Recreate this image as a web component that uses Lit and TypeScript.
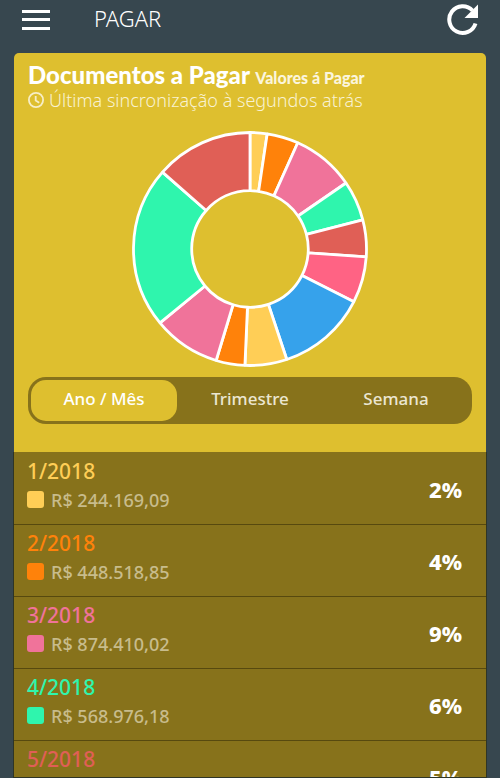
import { LitElement, html, svg, css } from "lit";
import { customElement, state } from "lit/decorators.js";
import { styleMap } from "lit/directives/style-map.js";

const YELLOW = "#ffce56";
const ORANGE = "#ff820a";
const PINK = "#f0739a";
const GREEN = "#2ff5ad";
const RED = "#e05f56";
const ROSE = "#ff6384";
const BLUE = "#36a2eb";

interface Slice {
  color: string;
  end: number;
}

const SLICES: Slice[] = [
  { color: YELLOW, end: 8.5 },
  { color: ORANGE, end: 24.2 },
  { color: PINK, end: 55.5 },
  { color: GREEN, end: 75.5 },
  { color: RED, end: 93.9 },
  { color: ROSE, end: 116.9 },
  { color: BLUE, end: 161.6 },
  { color: YELLOW, end: 182.5 },
  { color: ORANGE, end: 196.9 },
  { color: PINK, end: 230.6 },
  { color: GREEN, end: 311.3 },
  { color: RED, end: 360 },
];

const MONTHS = [
  { label: "1/2018", value: "R$ 244.169,09", share: "2%", color: YELLOW },
  { label: "2/2018", value: "R$ 448.518,85", share: "4%", color: ORANGE },
  { label: "3/2018", value: "R$ 874.410,02", share: "9%", color: PINK },
  { label: "4/2018", value: "R$ 568.976,18", share: "6%", color: GREEN },
  { label: "5/2018", value: "", share: "5%", color: RED },
];

@customElement("donut-chart")
export class DonutChart extends LitElement {
  static styles = css`
    :host {
      display: block;
      width: 236px;
      height: 236px;
    }
    .chart {
      display: block;
      width: 100%;
      height: 100%;
    }
    .slice {
      stroke: #fff;
      stroke-width: 2.8;
      stroke-linejoin: bevel;
    }
  `;

  private point(radius: number, degrees: number) {
    const a = (degrees * Math.PI) / 180;
    return `${(radius * Math.sin(a)).toFixed(2)} ${(-radius * Math.cos(a)).toFixed(2)}`;
  }

  private path(start: number, end: number) {
    const outer = 116.5;
    const inner = 58.3;
    return `M${this.point(outer, start)}A${outer} ${outer} 0 0 1 ${this.point(outer, end)}L${this.point(inner, end)}A${inner} ${inner} 0 0 0 ${this.point(inner, start)}Z`;
  }

  render() {
    return html`<svg class="chart" viewBox="-118 -118 236 236" role="img" aria-label="Valores por mês">
      ${SLICES.map((s, i) => svg`<path class="slice" fill=${s.color} d=${this.path(i ? SLICES[i - 1].end : 0, s.end)}></path>`)}
    </svg>`;
  }
}

@customElement("app-root")
export class AppRoot extends LitElement {
  @state() private period = "Ano / Mês";

  static styles = css`
    :host {
      display: flex;
      flex-direction: column;
      height: 100vh;
      overflow: hidden;
      background: #37474f;
      color: #fff;
      font-family: "Noto Sans", "Open Sans", sans-serif;
    }
    * {
      box-sizing: border-box;
    }
    button {
      border: 0;
      padding: 0;
      background: none;
      color: inherit;
      font: inherit;
      cursor: pointer;
    }
    .bar {
      display: flex;
      flex: none;
      align-items: center;
      height: 40px;
      margin-bottom: 13px;
      padding: 0 20px 0 22px;
    }
    .icon {
      display: block;
      flex: none;
    }
    .title {
      flex: 1;
      margin: 0 0 4px 44px;
      font-size: 22px;
      font-weight: 300;
      line-height: 32px;
    }
    .card {
      display: flex;
      flex: 1;
      flex-direction: column;
      min-height: 0;
      margin: 0 13px;
    }
    .summary {
      flex: none;
      margin: 0 1px;
      padding: 9px 14px 28px;
      border-radius: 5px 5px 0 0;
      background: #debf2f;
    }
    .heading {
      margin: 0;
      font-family: Lato, sans-serif;
      font-size: 24px;
      font-weight: 900;
      line-height: 26px;
      white-space: nowrap;
    }
    .sub {
      font-size: 16px;
      line-height: 1;
      color: #fbf5dc;
    }
    .sync {
      display: flex;
      align-items: center;
      gap: 4px;
      margin: 0 0 19px;
      font-size: 18px;
      font-weight: 300;
      line-height: 24px;
      color: #f9f2d2;
      white-space: nowrap;
    }
    .donut {
      margin: 0 auto 10px;
    }
    .tabs {
      display: flex;
      height: 47px;
      padding: 3px;
      border-radius: 18px;
      background: #87721b;
    }
    .tab {
      flex: 1;
      padding-bottom: 5px;
      border-radius: 15px;
      color: #ebe6d1;
      font-size: 17px;
      font-weight: 500;
    }
    .tab[aria-selected="true"] {
      background: #debf2f;
      color: #fff;
    }
    .list {
      flex: 1;
      min-height: 0;
      margin: 0;
      padding: 1px 0 0;
      overflow: hidden;
      border: solid #2e3526;
      border-width: 0 1px 1px;
      background: #87721b;
      list-style: none;
    }
    .row {
      display: flex;
      align-items: center;
      justify-content: space-between;
      height: 72px;
      padding: 0 24px 0 13px;
      border-bottom: 1px solid #57490f;
    }
    .month {
      font-size: 21px;
      font-weight: 500;
      line-height: 28px;
    }
    .amount {
      display: flex;
      align-items: center;
      gap: 7px;
      height: 30px;
      margin-bottom: 6px;
      font-size: 18px;
      font-weight: 500;
      line-height: 30px;
      color: #c8bc8c;
    }
    .swatch {
      width: 17px;
      height: 17px;
      border-radius: 3px;
    }
    .share {
      font-size: 22px;
      font-weight: 800;
    }
  `;

  render() {
    return html`
      <header class="bar">
        <button aria-label="Menu">
          <svg class="icon" width="28" height="20" viewBox="0 0 28 20" fill="#fff">
            <path d="M0 0h28v3H0zM0 8h28v3H0zM0 17h28v3H0z" />
          </svg>
        </button>
        <h1 class="title">PAGAR</h1>
        <button aria-label="Atualizar">
          <svg class="icon" width="33" height="32" viewBox="0 0 33 32">
            <path d="M28.5 19.5A13.400 13.400 0 1 1 25.500 6.500" fill="none" stroke="#fff" stroke-width="4" />
            <path d="M31 0.500v13.500H17.500z" fill="#fff" />
          </svg>
        </button>
      </header>
      <main class="card">
        <section class="summary">
          <h2 class="heading">Documentos a Pagar <span class="sub">Valores á Pagar</span></h2>
          <p class="sync">
            <svg class="icon" width="17" height="17" viewBox="0 0 17 17" fill="none" stroke="#f7eec6" stroke-width="1.8">
              <circle cx="8" cy="8" r="7.100" />
              <path d="M7.700 4v4.500l3.500 2.200" />
            </svg>
            Última sincronização à segundos atrás
          </p>
          <donut-chart class="donut"></donut-chart>
          <div class="tabs" role="tablist">
            ${["Ano / Mês", "Trimestre", "Semana"].map(
              (p) => html`<button class="tab" role="tab" aria-selected=${String(p === this.period)} @click=${() => (this.period = p)}>${p}</button>`
            )}
          </div>
        </section>
        <ul class="list">
          ${MONTHS.map(
            (m) => html`<li class="row">
              <div>
                <div class="month" style=${styleMap({ color: m.color })}>${m.label}</div>
                <div class="amount"><span class="swatch" style=${styleMap({ background: m.color })}></span>${m.value}</div>
              </div>
              <span class="share">${m.share}</span>
            </li>`
          )}
        </ul>
      </main>
    `;
  }
}
